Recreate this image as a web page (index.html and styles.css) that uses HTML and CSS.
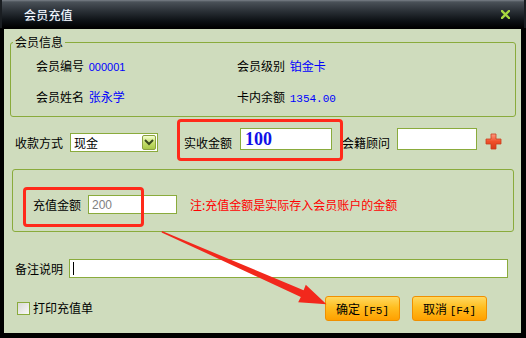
FILE: index.html
```html
<!DOCTYPE html>
<html lang="zh-CN">
<head>
  <meta charset="UTF-8" />
  <title>会员充值</title>
  <link rel="stylesheet" href="styles.css">
</head>
<body>
  <div class="dialog">
    <div class="title-bar">
      <span class="title">会员充值</span>
      <svg class="close" width="9" height="9" viewBox="0 0 9 9">
        <path d="M1 1 L8 8 M8 1 L1 8" stroke="#a8d840" stroke-width="2.4" stroke-linecap="square"/>
      </svg>
    </div>
    <div class="content">
      <fieldset class="group info">
        <legend>会员信息</legend>
        <div class="info-grid">
          <div class="field">会员编号 <span class="val num">000001</span></div>
          <div class="field">会员级别 <span class="val">铂金卡</span></div>
          <div class="field">会员姓名 <span class="val">张永学</span></div>
          <div class="field">卡内余额 <span class="val mono">1354.00</span></div>
        </div>
      </fieldset>

      <div class="row pay-row">
        <label class="lbl">收款方式</label>
        <div class="select">
          <span>现金</span>
          <span class="drop">
            <svg width="10" height="7" viewBox="0 0 10 7"><path d="M1 1 L5 5 L9 1" fill="none" stroke="#3a4a20" stroke-width="2"/></svg>
          </span>
        </div>
        <label class="lbl received-lbl">实收金额</label>
        <input class="txt received" type="text" value="100">
        <label class="lbl adviser-lbl">会籍顾问</label>
        <input class="txt adviser" type="text">
        <svg class="plus" width="17" height="17" viewBox="0 0 17 17">
          <defs>
            <linearGradient id="pg" x1="0" y1="0" x2="0" y2="1">
              <stop offset="0" stop-color="#ff9a80"/>
              <stop offset="0.5" stop-color="#f0502a"/>
              <stop offset="1" stop-color="#d83a18"/>
            </linearGradient>
          </defs>
          <path d="M6 1 H11 V6 H16 V11 H11 V16 H6 V11 H1 V6 H6 Z" fill="url(#pg)" stroke="#c84020" stroke-width="0.8" stroke-linejoin="round"/>
        </svg>
      </div>

      <div class="group charge">
        <div class="row">
          <label class="lbl">充值金额</label>
          <input class="txt charge-input" type="text" value="200">
          <span class="note">注:充值金额是实际存入会员账户的金额</span>
        </div>
      </div>

      <div class="row remark-row">
        <label class="lbl">备注说明</label>
        <div class="txt remark"><span class="caret"></span></div>
      </div>

      <div class="row bottom-row">
        <span class="check"></span>
        <span class="check-lbl">打印充值单</span>
        <button class="btn ok">确定 <span class="key">[F5]</span></button>
        <button class="btn cancel">取消 <span class="key">[F4]</span></button>
      </div>

      <div class="mark mark-1"></div>
      <div class="mark mark-2"></div>
      <svg class="arrow" width="517" height="304" viewBox="0 0 517 304">
        <polygon points="158,202 299.6,261.3 301.8,255.8 322.5,275.2 294.2,273.2 296.8,267.9 157.6,203.4" fill="#f2281c"/>
      </svg>
    </div>
  </div>
</body>
</html>
```

FILE: styles.css
```css
body {
  margin: 0;
  background: #000;
  font-family: "Noto Sans CJK SC", "Liberation Sans", sans-serif;
  font-size: 12px;
  color: #000;
}
.dialog {
  width: 526px;
  height: 338px;
  background: #000;
}
.title-bar {
  height: 28px;
  display: flex;
  align-items: center;
  padding: 0 14px 0 22px;
  background: linear-gradient(#7a8088 0, #4a5158 2px, #2a3036 40%, #0c1014 75%, #000 100%);
  border-left: 2px solid #1a1e22;
  border-right: 2px solid #1a1e22;
}
.title {
  color: #fff;
  font-size: 12px;
  letter-spacing: 0.2px;
  text-shadow: 0 0 1px #4a7ab0;
}
.close {
  margin-left: auto;
}
.content {
  position: relative;
  margin: 1px 0 0 4px;
  width: 517px;
  height: 304px;
  background: #cfdcbd;
  overflow: hidden;
}
.group {
  border: 1px solid #8aab3c;
  border-radius: 3px;
}
.info {
  margin: 6px 5px 0 6px;
  padding: 6px 0 10px 2px;
  min-width: 0;
}
.info legend {
  margin-left: 0;
  padding: 0 2px;
  line-height: 14px;
}
.info-grid {
  display: grid;
  grid-template-columns: 201px 1fr;
  grid-auto-rows: 20px;
  row-gap: 11px;
  align-items: center;
  padding-left: 23px;
}
.val {
  color: #0000ff;
  margin-left: 2px;
}
.num {
  font-family: "Liberation Sans", sans-serif;
  font-size: 11px;
}
.mono {
  font-family: "Liberation Mono", monospace;
  font-size: 11px;
}
.row {
  display: flex;
  align-items: center;
}
.lbl {
  line-height: 14px;
  white-space: nowrap;
}
.txt {
  box-sizing: border-box;
  border: 1px solid #8aab3c;
  background: #fff;
  margin: 0;
  padding: 0 3px;
  font-family: "Liberation Sans", sans-serif;
  outline: none;
}
.pay-row {
  margin-top: 11px;
  padding-left: 11px;
  height: 24px;
  align-items: flex-start;
}
.pay-row .lbl {
  margin-top: 8px;
}
.select {
  box-sizing: border-box;
  margin: 5px 0 0 7px;
  width: 88px;
  height: 19px;
  border: 1px solid #8aab3c;
  background: #fff;
  display: flex;
  align-items: center;
  padding-left: 3px;
}
.drop {
  margin-left: auto;
  margin-right: 1px;
  width: 14px;
  height: 15px;
  border-radius: 2px;
  border: 1px solid #8aa040;
  box-sizing: border-box;
  background: linear-gradient(#f4ffd0, #c8e070 50%, #a8c848);
  display: flex;
  align-items: center;
  justify-content: center;
}
.received-lbl {
  margin-left: 26px;
}
.received {
  margin-left: 8px;
  width: 92px;
  height: 22px;
  color: #1010e8;
  font-family: "Liberation Serif", serif;
  font-weight: bold;
  font-size: 18px;
  padding-left: 4px;
}
.adviser-lbl {
  margin-left: 10px;
}
.adviser {
  margin-left: 7px;
  width: 80px;
  height: 22px;
}
.plus {
  margin: 5px 0 0 8px;
}
.charge {
  margin: 17px 7px 0 8px;
  height: 63px;
  box-sizing: border-box;
  padding: 25px 0 0 20px;
}
.charge .row {
  height: 19px;
}
.charge-input {
  margin-left: 7px;
  width: 89px;
  height: 19px;
  color: #808080;
  font-size: 12px;
}
.note {
  margin-left: 13px;
  color: #ff0000;
}
.remark-row {
  margin-top: 27px;
  padding-left: 11px;
  height: 19px;
}
.remark {
  margin-left: 6px;
  width: 439px;
  height: 19px;
  display: flex;
  align-items: center;
}
.caret {
  width: 1px;
  height: 13px;
  background: #000;
}
.bottom-row {
  margin-top: 18px;
  padding-left: 13px;
  height: 25px;
}
.check {
  box-sizing: border-box;
  width: 13px;
  height: 13px;
  border: 1px solid #8aab3c;
  background: linear-gradient(135deg, #d8d8d4, #fafaf8);
}
.check-lbl {
  margin-left: 3px;
  margin-bottom: 2px;
}
.btn {
  box-sizing: border-box;
  width: 75px;
  height: 25px;
  border: 1px solid #f09000;
  border-radius: 3px;
  background: linear-gradient(#ffd860, #ffbe20 45%, #ffa000);
  font-family: "Noto Sans CJK SC", sans-serif;
  font-size: 12px;
  color: #000;
  padding: 0;
}
.key {
  font-family: "Liberation Mono", monospace;
  font-size: 11px;
}
.ok {
  margin-left: auto;
}
.cancel {
  margin: 0 34px 0 12px;
}
.mark {
  position: absolute;
  box-sizing: border-box;
  border: 3px solid #ff2a1a;
  border-radius: 4px;
}
.mark-1 {
  left: 173px;
  top: 90px;
  width: 166px;
  height: 42px;
}
.mark-2 {
  left: 19px;
  top: 158px;
  width: 121px;
  height: 40px;
}
.arrow {
  position: absolute;
  left: 0;
  top: 0;
  pointer-events: none;
}
```
